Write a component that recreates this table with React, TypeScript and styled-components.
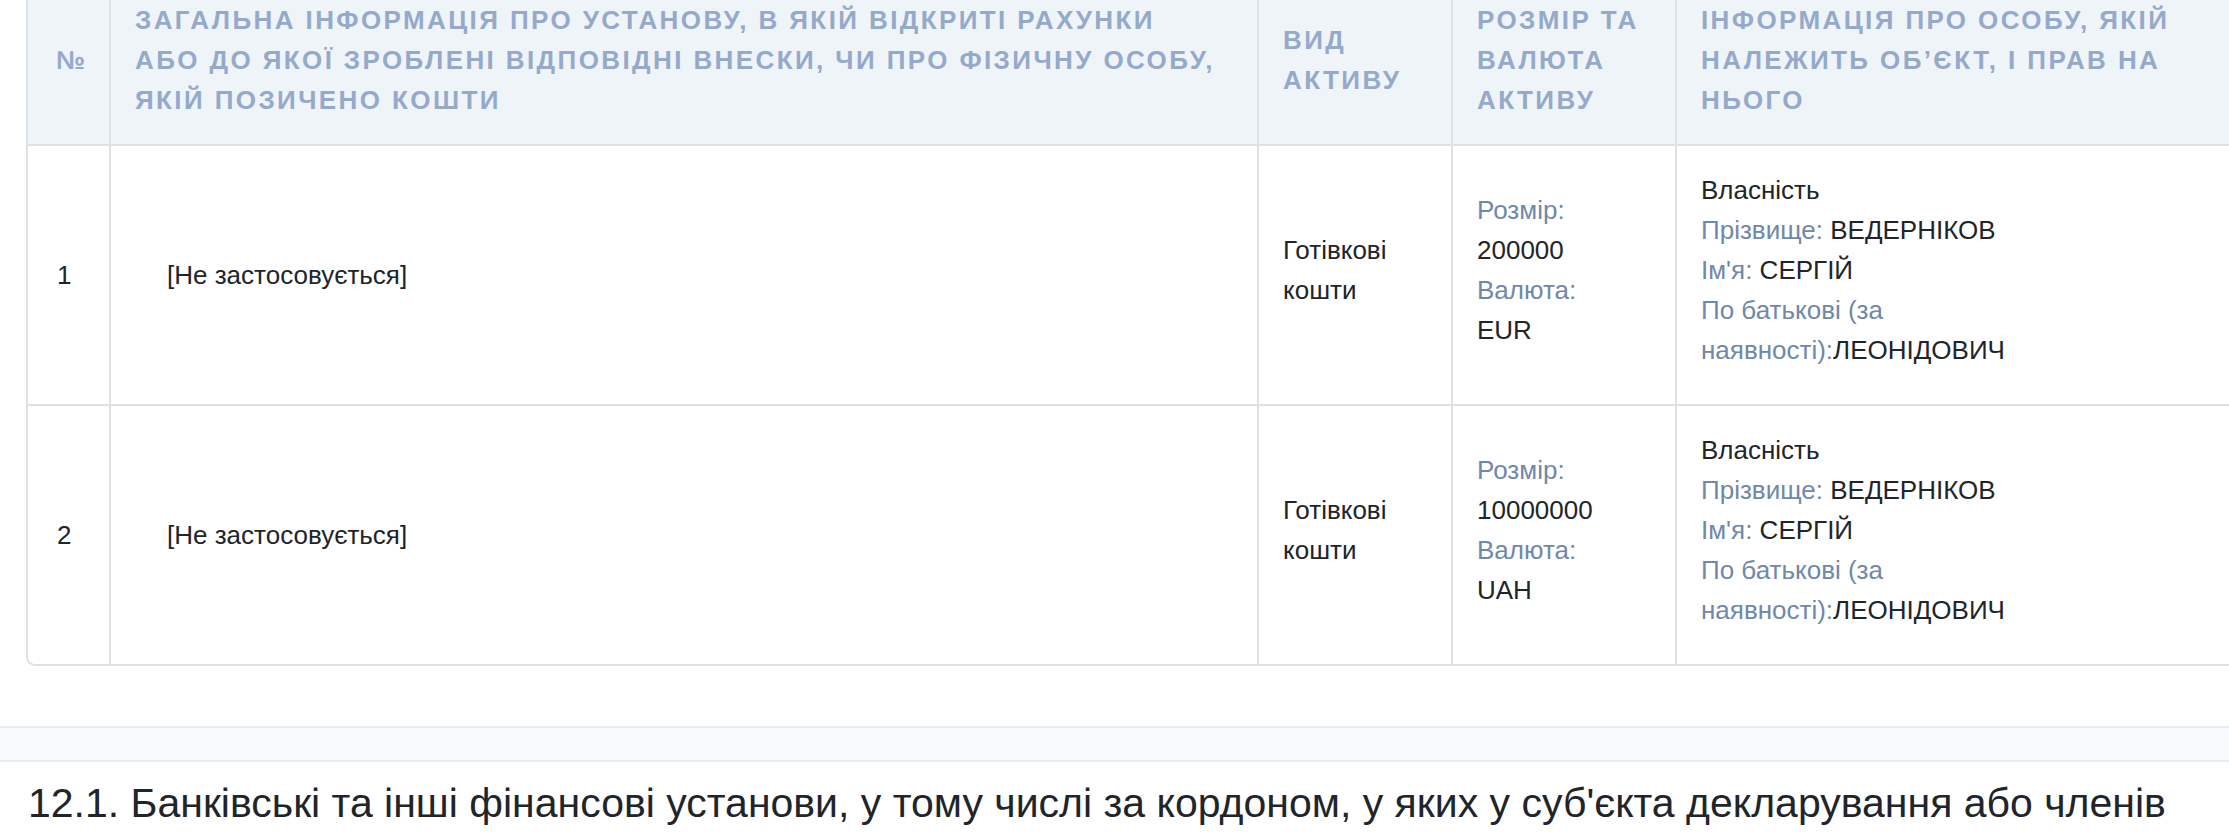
import React from "react";
import styled, { createGlobalStyle } from "styled-components";

const GlobalStyle = createGlobalStyle`
  html, body {
    margin: 0;
    padding: 0;
    background: #ffffff;
    overflow: hidden;
  }
  body {
    font-family: "Liberation Sans", Arial, Helvetica, sans-serif;
    color: #212529;
  }
`;

type Owner = {
  right: string;
  surname: string;
  name: string;
  patronymic: string;
};

type Row = {
  id: number;
  institution: string;
  kind: string[];
  size: string;
  currency: string;
  owner: Owner;
};

const rows: Row[] = [
  {
    id: 1,
    institution: "[Не застосовується]",
    kind: ["Готівкові", "кошти"],
    size: "200000",
    currency: "EUR",
    owner: {
      right: "Власність",
      surname: "ВЕДЕРНІКОВ",
      name: "СЕРГІЙ",
      patronymic: "ЛЕОНІДОВИЧ",
    },
  },
  {
    id: 2,
    institution: "[Не застосовується]",
    kind: ["Готівкові", "кошти"],
    size: "10000000",
    currency: "UAH",
    owner: {
      right: "Власність",
      surname: "ВЕДЕРНІКОВ",
      name: "СЕРГІЙ",
      patronymic: "ЛЕОНІДОВИЧ",
    },
  },
];

export default function App() {
  return (
    <Page>
      <GlobalStyle />
      <TableWrap>
        <Table>
          <colgroup>
            <col style={{ width: 83 }} />
            <col style={{ width: 1148 }} />
            <col style={{ width: 194 }} />
            <col style={{ width: 224 }} />
            <col style={{ width: 600 }} />
          </colgroup>
          <thead>
            <tr>
              <HeadCell $padLeft={28}>№</HeadCell>
              <HeadCell>
                Загальна інформація про установу, в якій відкриті рахунки
                <br />
                або до якої зроблені відповідні внески, чи про фізичну особу, якій позичено кошти
              </HeadCell>
              <HeadCell>Вид активу</HeadCell>
              <HeadCell>Розмір та валюта активу</HeadCell>
              <HeadCell $last>
                <HeadText>Інформація про особу, якій належить об’єкт, і прав на нього</HeadText>
              </HeadCell>
            </tr>
          </thead>
          <tbody>
            {rows.map((r, i) => {
              const lastRow = i === rows.length - 1;
              return (
                <tr key={r.id}>
                  <BodyCell $padLeft={29} $lastRow={lastRow}>
                    {r.id}
                  </BodyCell>
                  <BodyCell $padLeft={56} $lastRow={lastRow}>
                    {r.institution}
                  </BodyCell>
                  <BodyCell $lastRow={lastRow}>
                    <Lines>
                      {r.kind.map((k) => (
                        <div key={k}>{k}</div>
                      ))}
                    </Lines>
                  </BodyCell>
                  <BodyCell $lastRow={lastRow}>
                    <Lines>
                      <Label>Розмір:</Label>
                      <div>{r.size}</div>
                      <Label>Валюта:</Label>
                      <div>{r.currency}</div>
                    </Lines>
                  </BodyCell>
                  <BodyCell $last $lastRow={lastRow}>
                    <OwnerLines>
                      <div>{r.owner.right}</div>
                      <div>
                        <Label as="span">Прізвище:</Label> {r.owner.surname}
                      </div>
                      <div>
                        <Label as="span">Ім'я:</Label> {r.owner.name}
                      </div>
                      <div>
                        <Label as="span">По батькові (за наявності):</Label>
                        {r.owner.patronymic}
                      </div>
                    </OwnerLines>
                  </BodyCell>
                </tr>
              );
            })}
          </tbody>
        </Table>
      </TableWrap>

      <Band />

      <SectionTitle>
        12.1. Банківські та інші фінансові установи, у тому числі за кордоном, у яких у суб'єкта
        декларування або членів його сім'ї відкриті рахунки
      </SectionTitle>
    </Page>
  );
}

const Page = styled.div`
  width: 100%;
  height: 834px;
  overflow: hidden;
`;

const TableWrap = styled.div`
  padding-left: 26px;
  width: 2400px;
`;

const Table = styled.table`
  table-layout: fixed;
  width: 2251px;
  border-collapse: separate;
  border-spacing: 0;
  border-left: 2px solid #dee2e7;
  border-bottom: 2px solid #dee2e7;
  border-bottom-left-radius: 9px;
  font-size: 26px;
  line-height: 40px;
`;

const HeadCell = styled.th<{ $padLeft?: number; $last?: boolean }>`
  background: #eff4f9;
  color: #95aaca;
  font-weight: 700;
  font-size: 26px;
  line-height: 40px;
  letter-spacing: 2.4px;
  text-transform: uppercase;
  text-align: left;
  vertical-align: middle;
  padding: 0 24px 24px ${(p) => p.$padLeft ?? 24}px;
  border-bottom: 2px solid #dee2e7;
  border-right: ${(p) => (p.$last ? "none" : "2px solid #dee2e7")};
  box-sizing: border-box;
`;

const HeadText = styled.div`
  max-width: 480px;
`;

const BodyCell = styled.td<{
  $padLeft?: number;
  $last?: boolean;
  $lastRow?: boolean;
}>`
  color: #212529;
  font-size: 26px;
  line-height: 40px;
  text-align: left;
  vertical-align: middle;
  padding: 24px 24px 24px ${(p) => p.$padLeft ?? 24}px;
  border-bottom: ${(p) => (p.$lastRow ? "none" : "2px solid #dee2e7")};
  border-right: ${(p) => (p.$last ? "none" : "2px solid #dee2e7")};
  box-sizing: border-box;
`;

const Lines = styled.div`
  display: flex;
  flex-direction: column;
  margin-bottom: 10px;
`;

const OwnerLines = styled(Lines)`
  max-width: 400px;
`;

const Label = styled.div`
  color: #7088a9;
`;

const Band = styled.div`
  margin-top: 60px;
  height: 32px;
  background: #f9fafb;
  border-top: 2px solid #eaedf0;
  border-bottom: 2px solid #eaedf0;
`;

const SectionTitle = styled.h2`
  margin: 17px 0 0;
  padding: 0 28px;
  font-size: 41px;
  line-height: 49px;
  font-weight: 400;
  color: #212529;
`;
